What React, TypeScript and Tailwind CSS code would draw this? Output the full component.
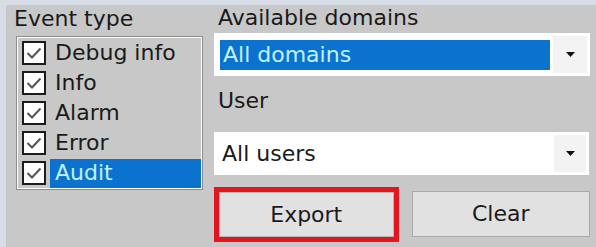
import React, { useState } from 'react'

const events = ['Debug info', 'Info', 'Alarm', 'Error', 'Audit']

const Check: React.FC = () => (
  <span className="flex h-[24px] w-[24px] shrink-0 items-center justify-center border-2 border-[#1c1c1c] bg-white">
    <svg width="16" height="12" viewBox="0 0 16 12">
      <path d="M1.5 6 L6 10.5 L14.5 1.5" fill="none" stroke="#555" strokeWidth="2" />
    </svg>
  </span>
)

const Arrow: React.FC = () => (
  <svg width="9" height="5" viewBox="0 0 9 5">
    <path d="M0 0 H9 L4.5 5 Z" fill="#111" />
  </svg>
)

const App: React.FC = () => {
  const [selected] = useState('Audit')

  return (
    <div
      className="flex h-[247px] w-[596px] bg-[#d7dde7] pl-[6px] pt-[5px] text-[22px] leading-[26px] text-[#1a1a1a]"
      style={{ fontFamily: '"DejaVu Sans", Tahoma, sans-serif' }}
    >
      <div className="flex flex-1 bg-[#c8c8c8]">
        {/* event types */}
        <div className="flex w-[206px] flex-col pl-[10px]">
          <div className="-ml-[2px] mt-[1px] h-[30px]">Event type</div>
          <div className="w-[187px] border border-[#8c8c8c]">
            <div className="h-[152px] border border-white">
              {events.map(ev => (
                <div key={ev} className="flex h-[30px] items-center pl-[4px]">
                  <Check />
                  <span
                    className={
                      'ml-[4px] flex h-[29px] flex-1 items-center pl-[5px] ' +
                      (ev === selected ? 'bg-[#0b72cf] text-[#c2f2ff]' : '')
                    }
                  >
                    {ev}
                  </span>
                </div>
              ))}
            </div>
          </div>
        </div>

        {/* domains / user / buttons */}
        <div className="flex w-[378px] flex-col pl-[2px]">
          <div className="ml-[4px] h-[28px]">Available domains</div>
          <div className="flex h-[43px] w-[376px] items-center bg-white py-[3px] pl-[6px] pr-[3px]">
            <div className="flex h-[30px] flex-1 items-center bg-[#0b72cf] pl-[3px] text-[#c2f2ff]">
              All domains
            </div>
            <div className="ml-[3px] flex h-full w-[34px] items-center justify-center bg-[#f3f3f3]">
              <Arrow />
            </div>
          </div>
          <div className="ml-[4px] mt-[12px] h-[28px]">User</div>
          <div className="mt-[16px] flex h-[43px] w-[375px] items-center bg-white py-[3px] pl-[8px] pr-[3px]">
            <div className="flex-1">All users</div>
            <div className="flex h-full w-[32px] items-center justify-center bg-[#f3f3f3]">
              <Arrow />
            </div>
          </div>
          <div className="mt-[12px] flex items-start">
            <button className="h-[55px] w-[185px] border-[5px] border-[#e3161e] bg-[#e1e1e1] p-0">
              <span className="flex h-full w-full items-center justify-center border border-[#b5b5b5]">
                Export
              </span>
            </button>
            <button className="ml-[13px] mt-[4px] flex h-[46px] w-[179px] items-center justify-center border border-[#a9a9a9] bg-[#e1e1e1]">
              Clear
            </button>
          </div>
        </div>
      </div>
    </div>
  )
}

export default App
